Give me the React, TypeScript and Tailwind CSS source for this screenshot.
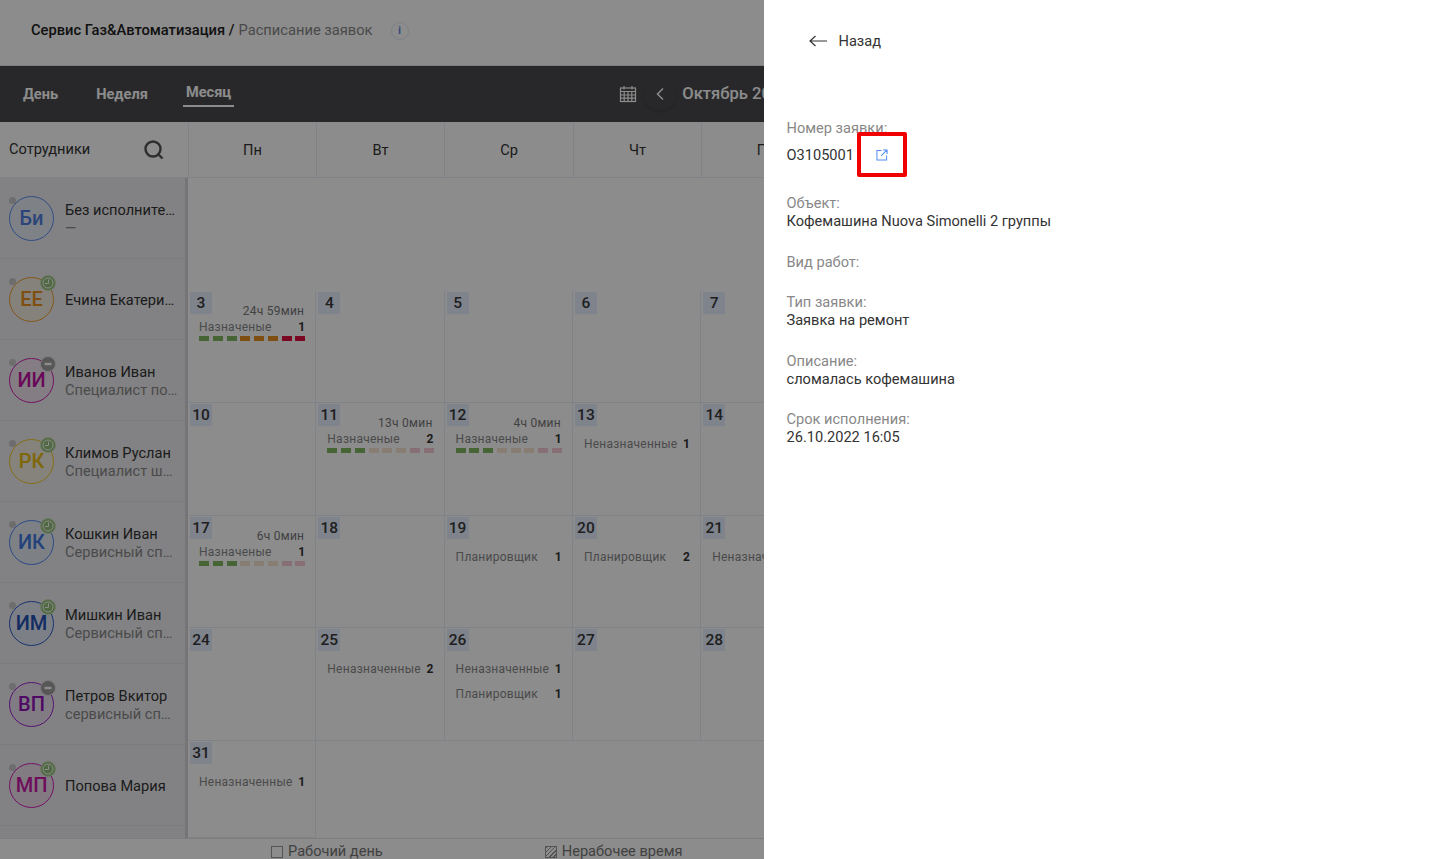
const EMPLOYEES = [
  { initials: 'Би', name: 'Без исполнителя', role: '—', color: 'border-[#5b8def] text-[#4f7fe0]', tint: 'bg-[#e6ebf5]', badge: null },
  { initials: 'ЕЕ', name: 'Ечина Екатерина', role: '', color: 'border-[#f0a030] text-[#e89020]', tint: 'bg-[#f2ebe0]', badge: 'clock' },
  { initials: 'ИИ', name: 'Иванов Иван', role: 'Специалист по ремонту', color: 'border-[#d020b0] text-[#c010a0]', tint: 'bg-[#f0e4ee]', badge: 'minus' },
  { initials: 'РК', name: 'Климов Руслан', role: 'Специалист широкого', color: 'border-[#f0c828] text-[#e8bc10]', tint: 'bg-[#f2efe0]', badge: 'clock' },
  { initials: 'ИК', name: 'Кошкин Иван', role: 'Сервисный специалист', color: 'border-[#4d88f0] text-[#4078e0]', tint: 'bg-[#e4ebf5]', badge: 'clock' },
  { initials: 'ИМ', name: 'Мишкин Иван', role: 'Сервисный специалист', color: 'border-[#2a5cc8] text-[#2450b4]', tint: 'bg-[#e2e8f4]', badge: 'clock' },
  { initials: 'ВП', name: 'Петров Вкитор', role: 'сервисный специалист', color: 'border-[#a020d0] text-[#9010b8]', tint: 'bg-[#ebe0ef]', badge: 'minus' },
  { initials: 'МП', name: 'Попова Мария', role: '', color: 'border-[#d020b8] text-[#c818a8]', tint: 'bg-[#efe0ed]', badge: 'clock' },
]

const WEEKDAYS = ['Пн', 'Вт', 'Ср', 'Чт', 'Пт', 'Сб', 'Вс']

type Day = {
  day?: number
  time?: string
  assigned?: number
  bright?: boolean
  rows?: [string, number][]
}

const DAYS: Day[] = [
  {}, {}, {}, {}, {}, { day: 1 }, { day: 2 },
  { day: 3, time: '24ч 59мин', assigned: 1, bright: true }, { day: 4 }, { day: 5 }, { day: 6 }, { day: 7 }, { day: 8 }, { day: 9 },
  { day: 10 }, { day: 11, time: '13ч 0мин', assigned: 2 }, { day: 12, time: '4ч 0мин', assigned: 1 }, { day: 13, rows: [['Неназначенные', 1]] }, { day: 14 }, { day: 15 }, { day: 16 },
  { day: 17, time: '6ч 0мин', assigned: 1 }, { day: 18 }, { day: 19, rows: [['Планировщик', 1]] }, { day: 20, rows: [['Планировщик', 2]] }, { day: 21, rows: [['Неназначенные', 1]] }, { day: 22 }, { day: 23 },
  { day: 24 }, { day: 25, rows: [['Неназначенные', 2]] }, { day: 26, rows: [['Неназначенные', 1], ['Планировщик', 1]] }, { day: 27 }, { day: 28 }, { day: 29 }, { day: 30 },
  { day: 31, rows: [['Неназначенные', 1]] }, {}, {}, {}, {}, {}, {},
]

const DETAILS = [
  { label: 'Объект:', value: 'Кофемашина Nuova Simonelli 2 группы' },
  { label: 'Вид работ:', value: '' },
  { label: 'Тип заявки:', value: 'Заявка на ремонт' },
  { label: 'Описание:', value: 'сломалась кофемашина' },
  { label: 'Срок исполнения:', value: '26.10.2022 16:05' },
]

function StatusBadge({ kind }: { kind: string | null }) {
  if (!kind) return null
  const clock = kind === 'clock'
  return (
    <span className={`absolute left-[30px] top-[-3px] flex h-[16px] w-[16px] items-center justify-center rounded-full border ${clock ? 'border-[#c9dfba] bg-[#94c078]' : 'border-[#e0e0e0] bg-[#9e9e9e]'}`}>
      <svg width="14" height="14" viewBox="0 0 14 14" fill="none">
        {clock ? (
          <>
            <circle cx="7" cy="7" r="5" stroke="#fff" strokeWidth="1" />
            <path d="M7.5 3.5V7.5H4" stroke="#fff" strokeWidth="1" />
          </>
        ) : (
          <path d="M3.5 7H10.5" stroke="#fff" strokeWidth="2.4" />
        )}
      </svg>
    </span>
  )
}

function DashBar({ bright }: { bright?: boolean }) {
  const colors = bright
    ? ['bg-[#82b85f]', 'bg-[#82b85f]', 'bg-[#82b85f]', 'bg-[#e89020]', 'bg-[#e89020]', 'bg-[#e89020]', 'bg-[#e0103f]', 'bg-[#e0103f]']
    : ['bg-[#82b85f]', 'bg-[#82b85f]', 'bg-[#82b85f]', 'bg-[#f6e4cf]', 'bg-[#f6e4cf]', 'bg-[#f6e4cf]', 'bg-[#f6cbd6]', 'bg-[#f6cbd6]']
  return (
    <div className="mt-[2px] flex justify-between">
      {colors.map((c, i) => (
        <span key={i} className={`h-[5px] w-[10px] ${c}`} />
      ))}
    </div>
  )
}

function DayCell({ cell }: { cell: Day }) {
  if (!cell.day) return <div />
  return (
    <div className="overflow-hidden border-r border-b border-[#e8edf5]">
      <div className={`flex items-start justify-between pr-[11px] ${cell.time ? 'h-[27px]' : 'h-[23px]'}`}>
        <span className="ml-[2px] mt-[1px] h-[22px] w-[22px] bg-[#e6eeff] text-center text-[15.5px] font-medium leading-[22px] text-[#3a3a3a]">
          {cell.day}
        </span>
        {cell.time && <span className="self-end text-[12px] leading-[14px] tracking-[0.25px] text-[#777]">{cell.time}</span>}
      </div>
      {cell.assigned && (
        <div className="pl-[11px] pr-[10px]">
          <div className="mt-[2px] flex h-[14px] justify-between text-[12px] leading-[14px] tracking-[0.25px] text-[#888]">
            <span>Назначеные</span>
            <span className="font-bold text-[#333]">{cell.assigned}</span>
          </div>
          <DashBar bright={cell.bright} />
        </div>
      )}
      {cell.rows && (
        <div className="mt-[11px] flex flex-col gap-[11px] pl-[11px] pr-[10px]">
          {cell.rows.map(([label, count]) => (
            <div key={label} className="flex h-[14px] justify-between whitespace-nowrap text-[12px] leading-[14px] tracking-[0.25px] text-[#888]">
              <span>{label}</span>
              <span className="font-bold text-[#333]">{count}</span>
            </div>
          ))}
        </div>
      )}
    </div>
  )
}

export default function App() {
  return (
    <div className="relative h-[859px] w-[1453px] overflow-hidden bg-white font-['Roboto',sans-serif] text-[#333]">
      {/* Page behind the drawer */}
      <header className="flex h-[66px] items-center border-b border-[#e4e4e4] pb-[4px] pl-[31px] text-[14.7px]">
        <span className="font-medium text-[#222]">Сервис Газ&amp;Автоматизация /</span>
        <span className="ml-[4px] text-[#888]">Расписание заявок</span>
        <span className="ml-[18px] flex h-[18px] w-[18px] items-center justify-center rounded-full border border-[#e3eaf6] text-[10px] font-bold leading-none text-[#4f7fe0]">i</span>
      </header>

      <nav className="flex h-[56px] items-center bg-[#4a4a4d] text-white">
        <div className="flex items-center pl-[23px] pt-[1px] text-[14.6px] font-bold">
          <span>День</span>
          <span className="ml-[38px]">Неделя</span>
          <span className="ml-[35px] border-b-2 border-white px-[3px] pb-[2px]">Месяц</span>
        </div>
        <div className="ml-[385px] flex items-center">
          <svg width="18" height="18" viewBox="0 0 18 18" fill="none" stroke="#fff" strokeWidth="1.2">
            <rect x="1.5" y="3" width="15" height="13.5" />
            <path d="M1.5 6.5H16.5M1.5 10H16.5M1.5 13.2H16.5M5.2 6.5V16.5M9 6.5V16.5M12.8 6.5V16.5M5 1V4.5M13 1V4.5" />
          </svg>
          <span className="ml-[7px] flex h-[32px] w-[32px] items-center justify-center rounded-full shadow-[0_2px_5px_rgba(0,0,0,0.15)]">
            <svg width="10" height="14" viewBox="0 0 10 14" fill="none" stroke="#fff" strokeWidth="1.5">
              <path d="M8 1.5L2.5 7L8 12.5" />
            </svg>
          </span>
          <span className="ml-[6px] whitespace-nowrap text-[16.6px] font-medium">Октябрь 2022</span>
        </div>
      </nav>

      <div className="flex h-[56px]">
        <div className="flex w-[189px] shrink-0 items-center justify-between border-r border-b border-[#e8edf5] pl-[9px] pr-[23px] pt-[1px] text-[14.6px]">
          <span>Сотрудники</span>
          <svg width="22" height="22" viewBox="0 0 22 22" fill="none" stroke="#555" strokeWidth="2.4">
            <circle cx="10" cy="10" r="7.5" />
            <path d="M15.5 15.5L19.5 19.5" />
          </svg>
        </div>
        <div className="grid flex-1 grid-cols-[128px_128px_129px_128px_128px_128px_128px]">
          {WEEKDAYS.map(d => (
            <div key={d} className="flex items-center justify-center border-r border-b border-[#e8edf5] pt-[2px] text-[14.6px]">{d}</div>
          ))}
        </div>
      </div>

      <div className="flex h-[660px]">
        <aside className="w-[188px] shrink-0 border-r-[3px] border-[#d5d5da] bg-[#ededf0]">
          {EMPLOYEES.map(e => (
            <div key={e.initials} className="flex h-[81px] items-center border-b border-[#e2e2e6] pl-[9px]">
              <div className={`relative flex h-[45px] w-[45px] shrink-0 items-center justify-center rounded-full border text-[20px] font-medium ${e.color} ${e.tint}`}>
                <span className="absolute left-[-1px] top-[0px] h-[7px] w-[7px] rounded-full bg-[#c6c6c6]" />
                {e.initials}
                <StatusBadge kind={e.badge} />
              </div>
              <div className="ml-[11px] w-[113px] pt-[2px] text-[14.6px] leading-[18px]">
                <div className="truncate text-[#333]">{e.name}</div>
                {e.role && <div className="truncate text-[#888]">{e.role}</div>}
              </div>
            </div>
          ))}
        </aside>
        <main className="grid flex-1 grid-cols-[repeat(7,128.3px)] grid-rows-[113px_112px_113px_112px_113px_97px]">
          {DAYS.map((cell, i) => (
            <DayCell key={i} cell={cell} />
          ))}
        </main>
      </div>

      <footer className="flex h-[21px] items-center border-t border-[#e4e4e4] pl-[271px] pt-[6px] text-[14.6px] text-[#777]">
        <span className="h-[12px] w-[12px] border border-[#999]" />
        <span className="ml-[5px]">Рабочий день</span>
        <span className="ml-[162px] h-[12px] w-[12px] border border-[#999] bg-[repeating-linear-gradient(135deg,#999_0,#999_1px,#fff_1px,#fff_3px)]" />
        <span className="ml-[5px]">Нерабочее время</span>
      </footer>

      {/* Dim layer */}
      <div className="absolute inset-0 bg-black/45" />

      {/* Drawer */}
      <section className="absolute inset-y-0 right-0 w-[689px] bg-white pl-[22.5px] text-[14.6px] leading-[18px] text-[#333]">
        <div className="flex items-center pl-[22px] pt-[32px]">
          <svg width="18" height="12" viewBox="0 0 18 12" fill="none" stroke="#333" strokeWidth="1.2">
            <path d="M18 6H1M6.5 1L1 6L6.5 11" />
          </svg>
          <span className="ml-[12px]">Назад</span>
        </div>

        <div className="mt-[69px]">
          <div className="text-[#888]">Номер заявки:</div>
          <div className="mt-[9px] flex items-center">
            <span>О3105001</span>
            <svg className="ml-[22px]" width="12" height="12" viewBox="0 0 13 13" fill="none" stroke="#4f8ef0" strokeWidth="1.1">
              <path d="M6 1.5H1V12H11.5V7M7.5 1H12V5.5M12 1L5.5 7.5" />
            </svg>
          </div>
        </div>

        <div className="mt-[30px] flex flex-col gap-[22.5px]">
          {DETAILS.map(d => (
            <div key={d.label}>
              <div className="text-[#888]">{d.label}</div>
              {d.value && <div>{d.value}</div>}
            </div>
          ))}
        </div>
      </section>

      {/* Red annotation frame from the screenshot */}
      <div className="absolute left-[857px] top-[132px] h-[45px] w-[50px] rounded-[2px] border-4 border-[#f00000]" />
    </div>
  )
}
